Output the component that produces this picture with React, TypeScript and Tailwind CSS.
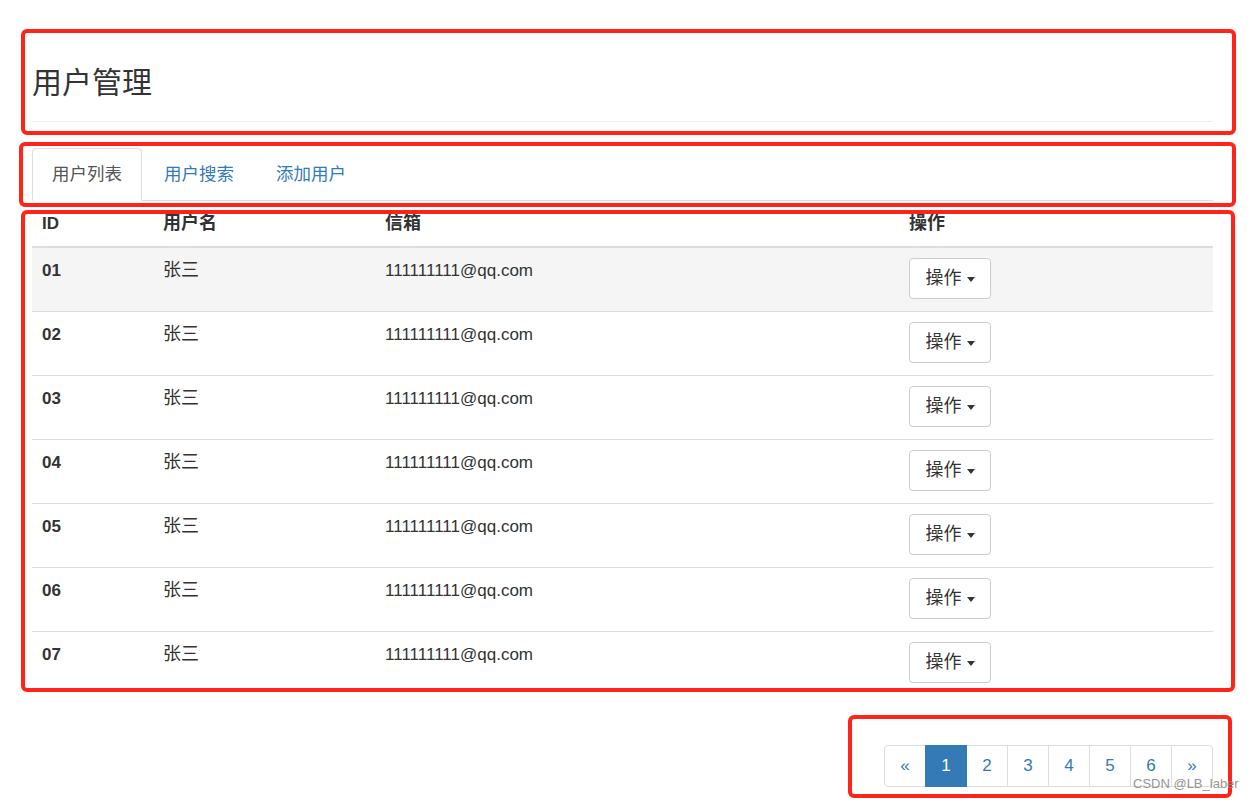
import React from "react";

const rows = ["01", "02", "03", "04", "05", "06", "07"];

function RedBox({ cls }: { cls: string }) {
  return <div className={"pointer-events-none absolute rounded-[6px] border-[4px] border-[#ff2419] " + cls} />;
}

export default function App() {
  return (
    <div className="relative w-[1254px] h-[800px] overflow-hidden bg-white text-[#333] font-['Liberation_Sans','Noto_Sans_CJK_SC',sans-serif]">
      <div className="ml-[32px] w-[1181px]">
        {/* page header */}
        <div className="pt-[66px] pb-[22px] border-b border-[#eee]">
          <h1 className="text-[30px] leading-[33px] font-normal text-[#333]">用户管理</h1>
        </div>

        {/* tabs */}
        <div className="mt-[26px] flex border-b border-[#ddd]">
          <div className="-mb-px mr-[2px] rounded-t-[4px] border border-[#ddd] border-b-transparent bg-white px-[19px] pt-[13px] pb-[13px] text-[17.5px] leading-[25px] text-[#555]">
            用户列表
          </div>
          <div className="-mb-px mr-[2px] rounded-t-[4px] border border-transparent px-[19px] pt-[13px] pb-[13px] text-[17.5px] leading-[25px] text-[#337ab7]">
            用户搜索
          </div>
          <div className="-mb-px mr-[2px] rounded-t-[4px] border border-transparent px-[19px] pt-[13px] pb-[13px] text-[17.5px] leading-[25px] text-[#337ab7]">
            添加用户
          </div>
        </div>

        {/* table */}
        <div>
          <div className="flex h-[47px] border-b-2 border-[#ddd] font-bold">
            <div className="w-[121px] px-[10px] pt-[10px] text-[17px] leading-[25px]">ID</div>
            <div className="w-[222px] px-[10px] pt-[10px] text-[18px] leading-[25px]">用户名</div>
            <div className="w-[524px] px-[10px] pt-[10px] text-[18px] leading-[25px]">信箱</div>
            <div className="w-[314px] px-[10px] pt-[10px] text-[18px] leading-[25px]">操作</div>
          </div>
          {rows.map((id, i) => (
            <div
              key={id}
              className={
                "flex h-[63px] box-content " +
                (i === 0 ? "bg-[#f5f5f5]" : "border-t border-[#ddd]")
              }
            >
              <div className="w-[121px] px-[10px] pt-[10px] text-[17px] leading-[25px] font-bold">{id}</div>
              <div className="w-[222px] px-[10px] pt-[10px] text-[18px] leading-[25px]">张三</div>
              <div className="w-[524px] px-[10px] pt-[10px] text-[17px] leading-[25px]">111111111@qq.com</div>
              <div className="w-[314px] px-[10px] pt-[10px]">
                <div className="flex h-[41px] w-[82px] items-center justify-center rounded-[4px] border border-[#ccc] bg-white text-[18px] leading-[25px] text-[#333]">
                  <span>操作</span>
                  <span className="ml-[5px] mt-[1px] inline-block h-0 w-0 border-x-[4.5px] border-t-[5px] border-x-transparent border-t-[#333]" />
                </div>
              </div>
            </div>
          ))}
        </div>

        {/* pagination */}
        <div className="mt-[50px] flex justify-end">
          <div className="flex text-[17px] text-[#337ab7]">
            <div className="flex h-[42px] w-[42px] items-center justify-center rounded-l-[4px] border border-[#ddd] bg-white">«</div>
            <div className="relative z-10 -ml-px flex h-[42px] w-[42px] items-center justify-center border border-[#337ab7] bg-[#337ab7] text-white">1</div>
            {["2", "3", "4", "5", "6"].map((n) => (
              <div key={n} className="-ml-px flex h-[42px] w-[42px] items-center justify-center border border-[#ddd] bg-white">
                {n}
              </div>
            ))}
            <div className="-ml-px flex h-[42px] w-[42px] items-center justify-center rounded-r-[4px] border border-[#ddd] bg-white">»</div>
          </div>
        </div>
      </div>

      {/* annotation boxes */}
      <RedBox cls="left-[21px] top-[29px] w-[1215px] h-[106px]" />
      <RedBox cls="left-[19px] top-[142px] w-[1217px] h-[65px]" />
      <RedBox cls="left-[21px] top-[210px] w-[1214px] h-[482px]" />
      <RedBox cls="left-[848px] top-[715px] w-[384px] h-[83px]" />

      {/* watermark */}
      <div className="pointer-events-none absolute left-[1133px] top-[776px] text-[13px] leading-[16px] text-[#8a8a8a] opacity-90 font-['Liberation_Sans',sans-serif]">
        CSDN @LB_laber
      </div>
    </div>
  );
}
